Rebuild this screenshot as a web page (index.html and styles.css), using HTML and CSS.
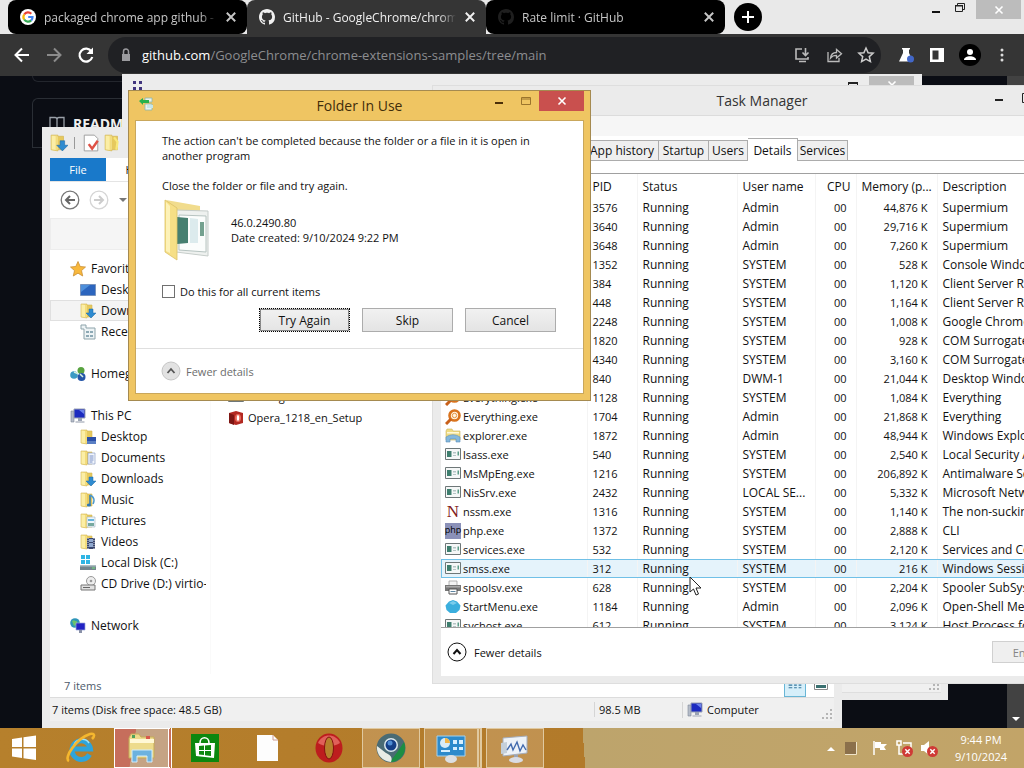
FILE: index.html
```
<!DOCTYPE html>
<html lang="en">
<head>
<meta charset="utf-8">
<title>Desktop</title>
<link rel="stylesheet" href="styles.css">
</head>
<body>
<svg class="defs" width="0" height="0" aria-hidden="true">
  <symbol id="i-x" viewBox="0 0 10 10"><path d="M1.5 1.5l7 7M8.500 1.500l-7 7" stroke="currentColor" stroke-width="1.600" fill="none"/></symbol>
  <symbol id="i-octocat" viewBox="0 0 16 16"><path fill="currentColor" d="M8 0C3.580 0 0 3.580 0 8c0 3.540 2.290 6.530 5.470 7.590.4.070.550-.170.550-.380 0-.190-.010-.820-.010-1.490-2.010.370-2.530-.490-2.690-.940-.090-.230-.480-.940-.820-1.130-.280-.150-.680-.520-.010-.530.630-.010 1.080.580 1.230.820.720 1.210 1.870.870 2.330.660.070-.520.280-.870.510-1.070-1.780-.2-3.640-.890-3.640-3.950 0-.870.310-1.590.820-2.150-.080-.2-.360-1.020.080-2.120 0 0 .670-.210 2.200.820.640-.180 1.320-.270 2-.270s1.360.090 2 .270c1.530-1.040 2.200-.820 2.200-.820.440 1.100.160 1.920.080 2.120.510.560.820 1.270.820 2.150 0 3.070-1.870 3.750-3.650 3.950.290.250.540.730.540 1.480 0 1.070-.010 1.930-.010 2.200 0 .210.150.460.550.380A8.010 8.010 0 0016 8c0-4.420-3.580-8-8-8z"/></symbol>
  <symbol id="i-folder" viewBox="0 0 16 16"><path d="M1 1h6v14l-6-1z" fill="#f3dc7c"/><path d="M1 1l4 1v13l-4-1z" fill="#fbeea6"/><path d="M7 2h5v12H7z" fill="#e6c95e"/><path d="M1 1h6v1h5v12H7v1l-6-1z" fill="none" stroke="#d3b550" stroke-width=".6"/></symbol>
  <symbol id="i-down" viewBox="0 0 16 16"><use href="#i-folder"/><path d="M9 6h4v4h3l-5 5-5-5h3z" fill="#2f8bd0" stroke="#1a68a8" stroke-width=".5"/></symbol>
  <symbol id="i-fdesk" viewBox="0 0 16 16"><use href="#i-folder"/><path d="M7 8h9v6H7z" fill="#2b4fa8"/><path d="M7 12h9v3H7z" fill="#5a7fc4"/></symbol>
  <symbol id="i-fdoc" viewBox="0 0 16 16"><use href="#i-folder"/><path d="M8 3h7v11H8z" fill="#f2f6fc" stroke="#8c9fc4" stroke-width=".7"/><path d="M9.500 6h4M9.500 8h4M9.500 10h4M9.500 12h3" stroke="#5b77b8" stroke-width=".8"/></symbol>
  <symbol id="i-fmusic" viewBox="0 0 16 16"><use href="#i-folder"/><path d="M10 3v9" stroke="#2d78b4" stroke-width="1.500"/><path d="M10 3c4 2 5 5 3 9" stroke="#4a98ce" stroke-width="1.500" fill="none"/><ellipse cx="9" cy="13" rx="2.200" ry="1.600" fill="#2d78b4"/></symbol>
  <symbol id="i-fpic" viewBox="0 0 16 16"><use href="#i-folder"/><path d="M7 4h8v10H7z" fill="#eef6fb" stroke="#a2b4c0" stroke-width=".6"/><path d="M8 6h6v2H8z" fill="#67b4dd"/><path d="M8 10h6v3H8z" fill="#77a99f"/></symbol>
  <symbol id="i-fvid" viewBox="0 0 16 16"><use href="#i-folder"/><path d="M7 4h8v11H7z" fill="#39466e"/><path d="M9 5h4v3H9zM9 9h4v4H9z" fill="#8fa8cf"/><path d="M8 4v11M14 4v11" stroke="#fff" stroke-width=".8" stroke-dasharray="1 1"/></symbol>
  <symbol id="i-exe" viewBox="0 0 16 16"><path d="M.5 1.500h15v11H.5z" fill="#f5f7f7" stroke="#6e7778"/><path d="M2 4h4.500v6H2z" fill="#3e7e6e"/><path d="M8 5h3v1.500H8zM8 8h3v1H8z" fill="#b5c5c5"/><path d="M12.500 4.500H14v4h-1.500z" fill="#5b9c87"/></symbol>
  <symbol id="i-search" viewBox="0 0 16 16"><circle cx="9.500" cy="6.500" r="5" fill="#fff3df" stroke="#d9731d" stroke-width="2.600"/><path d="M6 10l-5 5" stroke="#c8601a" stroke-width="3"/><circle cx="9.500" cy="6.500" r="2.200" fill="none" stroke="#e89343"/></symbol>
  <symbol id="i-pc" viewBox="0 0 16 16"><path d="M1 3h3v11H1z" fill="#b5bcc9" stroke="#7d8798" stroke-width=".6"/><path d="M4 1h11v9H4z" fill="#1c2bc0" stroke="#9aa3b4"/><path d="M9 2h5v4z" fill="#6c83ec"/><path d="M8 10h4v3H8z" fill="#9aa3b4"/><path d="M5.500 13h9v2h-9z" fill="#c8ccd4"/></symbol>
  <symbol id="i-expl" viewBox="0 0 16 16"><path d="M1 3l1-2h5l1 2h7v9H1z" fill="#f0dc82" stroke="#c9b45c" stroke-width=".6"/><path d="M2 4h12v1.500H2z" fill="#fff9d8"/><path d="M1 9c5-3 9-3 14 0v5h-4v-3H5v3H1z" fill="#84b8dc" stroke="#5c8fb8" stroke-width=".6"/></symbol>
  <symbol id="i-caret" viewBox="0 0 20 20"><circle cx="10" cy="10" r="9" fill="none" stroke="currentColor"/><path d="M6.500 12L10 8l3.500 4" stroke="currentColor" stroke-width="2" fill="none"/></symbol>
  <symbol id="i-grip" viewBox="0 0 10 10"><path d="M8 0h2v2H8zM8 4h2v2H8zM8 8h2v2H8zM4 4h2v2H4zM4 8h2v2H4zM0 8h2v2H0z" fill="#b5b5b5"/></symbol>
  <symbol id="i-bad" viewBox="0 0 10 10"><circle cx="5" cy="5" r="5" fill="#cf3a36"/><path d="M3 3l4 4M7 3L3 7" stroke="#fff" stroke-width="1.300"/></symbol>
</svg>

<main class="workspace">
  <section class="browser" aria-label="Browser">
    <div class="tabstrip">
      <div class="tab">
        <svg class="s16" viewBox="0 0 16 16"><circle cx="8" cy="8" r="8" fill="#fff"/><g fill="none" stroke-width="2.200"><path d="M4.200 5.500A4.600 4.600 0 0111.300 4.800" stroke="#ea4335"/><path d="M4.200 5.500a4.600 4.600 0 000 5" stroke="#fbbc05"/><path d="M4.200 10.500a4.600 4.600 0 007 .9" stroke="#34a853"/><path d="M11.200 11.400A4.600 4.600 0 0012.500 8H8.200" stroke="#4285f4"/></g></svg>
        <span class="tab-text">packaged chrome app github - G</span><button class="tab-x" aria-label="Close tab"><svg viewBox="0 0 10 10"><use href="#i-x"/></svg></button>
      </div>
      <div class="tab active">
        <svg class="s16" viewBox="0 0 16 16"><use href="#i-octocat"/></svg>
        <span class="tab-text">GitHub - GoogleChrome/chrome</span><button class="tab-x" aria-label="Close tab"><svg viewBox="0 0 10 10"><use href="#i-x"/></svg></button>
      </div>
      <div class="tab">
        <svg class="s16 dim" viewBox="0 0 16 16"><use href="#i-octocat"/></svg>
        <span class="tab-text">Rate limit · GitHub</span><button class="tab-x" aria-label="Close tab"><svg viewBox="0 0 10 10"><use href="#i-x"/></svg></button>
      </div>
      <button class="newtab" aria-label="New tab"><svg viewBox="0 0 28 28"><path d="M14 8v12M8 14h12" stroke="#fff" stroke-width="2"/></svg></button>
      <div class="chrome-ctl">
        <svg class="s16" viewBox="0 0 16 16"><path d="M4 11h8v2H4z" fill="#111"/></svg>
        <svg class="s16" viewBox="0 0 16 16"><path d="M3.500 5.500h7v6h-7zM5.500 5V3.500h7v6H11" fill="none" stroke="#222"/><path d="M3 5h8v1.500H3z" fill="#222"/></svg>
        <button class="chrome-close" aria-label="Close"><svg class="s10" viewBox="0 0 10 10"><use href="#i-x"/></svg></button>
      </div>
    </div>
    <div class="toolbar">
      <svg class="s20" viewBox="0 0 20 20"><path d="M17 10H4M10 3.500L3.500 10l6.500 6.500" stroke="#fff" stroke-width="2" fill="none"/></svg>
      <svg class="s20" viewBox="0 0 20 20"><path d="M3 10h13M10 3.500l6.500 6.500-6.500 6.500" stroke="#8b8b8b" stroke-width="2" fill="none"/></svg>
      <svg class="s20" viewBox="0 0 20 20"><path d="M15.500 6.500A6.500 6.500 0 1016.300 12" stroke="#fff" stroke-width="2.200" fill="none"/><path d="M17 2.500V9h-6.500z" fill="#fff"/></svg>
      <div class="omnibox">
        <svg class="s16" viewBox="0 0 16 16"><path d="M4 7h8v7H4z" fill="#9b9b9f"/><path d="M5.500 7V4.500a2.500 2.500 0 015 0V7" stroke="#9b9b9f" stroke-width="1.500" fill="none"/></svg>
        <span class="url"><b>github.com</b>/GoogleChrome/chrome-extensions-samples/tree/main</span>
        <svg class="s18" viewBox="0 0 18 18"><path d="M9 3H3v10h12v-2M6 15.500h7" stroke="#bbb" stroke-width="1.600" fill="none"/><path d="M12.500 2v7M9.500 6.500l3 3 3-3" stroke="#bbb" stroke-width="1.600" fill="none"/></svg>
        <svg class="s18" viewBox="0 0 18 18"><path d="M3 6v9.500h11V12" stroke="#bbb" stroke-width="1.300" fill="none"/><path d="M5.500 12c.5-4 3-5.500 6-5.500V3.500l5 4.300-5 4.200V9.300c-2.500 0-4.500.7-6 2.700z" fill="none" stroke="#bbb" stroke-width="1.300"/></svg>
        <svg class="s18" viewBox="0 0 18 18"><path d="M9 2l2.100 4.700 5 .5-3.800 3.400 1.100 5L9 13l-4.400 2.600 1.100-5L1.900 7.200l5-.5z" fill="none" stroke="#ccc" stroke-width="1.500"/></svg>
      </div>
      <div class="extensions">
        <svg class="s18" viewBox="0 0 18 18"><path d="M5 2h8v1.500h-1V7l4 8.500H2L6 7V3.500H5z" fill="#fff"/><circle cx="13.500" cy="13" r="3.500" fill="#4267c8"/></svg>
        <svg class="s18" viewBox="0 0 18 18"><path d="M2 2h14v14H2z" fill="#fff"/><path d="M4.500 4.500h6v9h-6z" fill="#353535"/></svg>
        <svg class="s22" viewBox="0 0 22 22"><circle cx="11" cy="11" r="11" fill="#000"/><circle cx="11" cy="8" r="3" fill="#fff"/><path d="M5 16c0-5 12-5 12 0z" fill="#fff"/></svg>
        <svg class="s16" viewBox="0 0 16 16"><circle cx="8" cy="3" r="1.500" fill="#ddd"/><circle cx="8" cy="8" r="1.500" fill="#ddd"/><circle cx="8" cy="13" r="1.500" fill="#ddd"/></svg>
      </div>
    </div>
    <div class="page">
      <div class="page-body">
        <div class="strip"></div>
        <div class="readme"><svg class="s16" viewBox="0 0 16 16"><path d="M1 2.500h5q2 0 2 2 0-2 2-2h5v11h-5q-2 0-2 1.500 0-1.500-2-1.500H1zM8 4.500V15" fill="none" stroke="#9aa0a8" stroke-width="1.300"/></svg><b>README</b></div>
      </div>
      <div class="page-scroll"><svg class="s10" viewBox="0 0 10 10"><path d="M1 3h8L5 7z" fill="#fff"/></svg></div>
    </div>
  </section>

  <section class="win back-lower" aria-label="Background folder"><div class="back-status"><svg class="s10" viewBox="0 0 10 10"><use href="#i-grip"/></svg></div></section>
  <section class="win back-upper" aria-label="Background window">
    <svg class="s16" viewBox="0 0 16 16"><path d="M3 3h3v3H3zM9 3h3v3H9zM3 9h3v3H3zM9 9h3v3H9z" fill="#41357e"/></svg>
    <svg class="s16 back-max" viewBox="0 0 16 16"><path d="M3.500 4.500h9v8h-9z" fill="none" stroke="#222"/><path d="M3 4h10v2H3z" fill="#222"/></svg>
    <span class="back-close"><svg class="s10" viewBox="0 0 10 10"><use href="#i-x"/></svg></span>
  </section>

  <section class="win explorer" aria-label="Downloads">
    <div class="quick">
      <svg class="s18" viewBox="0 0 16 16"><use href="#i-down"/></svg><i></i>
      <svg class="s18" viewBox="0 0 16 16"><path d="M2 1h9l3 3v11H2z" fill="#fff" stroke="#999" stroke-width=".8"/><path d="M6 9l3 4 5-7" stroke="#df5145" stroke-width="2.200" fill="none"/></svg>
      <svg class="s18" viewBox="0 0 16 16"><use href="#i-folder"/><path d="M9 3l3 4-1 7" stroke="#f8e87b" stroke-width="2" fill="none"/></svg>
    </div>
    <div class="ribbon"><button class="file">File</button><button class="ribtab">Home</button></div>
    <div class="navrow">
      <svg class="s20" viewBox="0 0 20 20"><circle cx="10" cy="10" r="8.800" fill="none" stroke="#777" stroke-width="1.300"/><path d="M15 10H6M10 6l-4 4 4 4" stroke="#666" stroke-width="2" fill="none"/></svg>
      <svg class="s20" viewBox="0 0 20 20"><circle cx="10" cy="10" r="8.800" fill="none" stroke="#d5d5d5" stroke-width="1.300"/><path d="M5 10h9M10 6l4 4-4 4" stroke="#ccc" stroke-width="2" fill="none"/></svg>
      <svg class="s10" viewBox="0 0 10 10"><path d="M1 3h8L5 7z" fill="#777"/></svg>
    </div>
    <div class="organize"></div>
    <div class="panes">
      <ul class="tree">
        <li class="root"><svg class="s16" viewBox="0 0 16 16"><path d="M8 .5l2.200 5 5.300.5-4 3.600 1.200 5.400L8 12.200 3.300 15l1.200-5.400L.5 6l5.300-.5z" fill="#f8b83c" stroke="#c98f35" stroke-width=".8"/></svg>Favorites</li>
        <li><svg class="s16" viewBox="0 0 16 16"><path d="M.5 2.500h15v11H.5z" fill="#2c65be" stroke="#7893bd"/><path d="M1 3h9L1 10z" fill="#4d8fdb"/></svg>Desktop</li>
        <li class="sel"><svg class="s16" viewBox="0 0 16 16"><use href="#i-down"/></svg>Downloads</li>
        <li><svg class="s16" viewBox="0 0 16 16"><path d="M1 1h5v3h9v11H4V5H1z" fill="#edf3f5" stroke="#8da3aa"/><path d="M6 7h3v2H6zM10 7h3v2h-3zM6 11h3v2H6zM10 11h3v2h-3z" fill="#8da9b5"/></svg>Recent places</li>
        <li class="gap"></li>
        <li class="root"><svg class="s16" viewBox="0 0 16 16"><circle cx="11" cy="4.500" r="3.500" fill="#58a33f"/><circle cx="4" cy="9" r="3.800" fill="#3c9ac4"/><circle cx="11.500" cy="11" r="4" fill="#2556a8"/><path d="M4 6l5 2M10 8l3 3" stroke="#d7f0e1" stroke-width="1.500"/></svg>Homegroup</li>
        <li class="gap"></li>
        <li class="root"><svg class="s16" viewBox="0 0 16 16"><use href="#i-pc"/></svg>This PC</li>
        <li><svg class="s16" viewBox="0 0 16 16"><use href="#i-fdesk"/></svg>Desktop</li>
        <li><svg class="s16" viewBox="0 0 16 16"><use href="#i-fdoc"/></svg>Documents</li>
        <li><svg class="s16" viewBox="0 0 16 16"><use href="#i-down"/></svg>Downloads</li>
        <li><svg class="s16" viewBox="0 0 16 16"><use href="#i-fmusic"/></svg>Music</li>
        <li><svg class="s16" viewBox="0 0 16 16"><use href="#i-fpic"/></svg>Pictures</li>
        <li><svg class="s16" viewBox="0 0 16 16"><use href="#i-fvid"/></svg>Videos</li>
        <li><svg class="s16" viewBox="0 0 16 16"><path d="M1 0h4v4H1zM6 0h4v4H6zM1 5h4v4H1zM6 5h4v4H6z" fill="#2fb5e4"/><path d="M0 10h16v5H0z" fill="#73858d"/><path d="M0 10h16v1.500H0z" fill="#aebcc2"/><path d="M12 12.500h3v1h-3z" fill="#71e07a"/></svg>Local Disk (C:)</li>
        <li><svg class="s16" viewBox="0 0 16 16"><circle cx="11" cy="5" r="4.500" fill="#eee" stroke="#999"/><circle cx="11" cy="5" r="1.300" fill="#999"/><path d="M1 9h14v5H1z" fill="#e2e2e2" stroke="#777"/><path d="M3 11.500h7" stroke="#666"/></svg>CD Drive (D:) virtio-win</li>
        <li class="gap"></li>
        <li class="root"><svg class="s16" viewBox="0 0 16 16"><circle cx="5" cy="5" r="4.800" fill="#2e95b8"/><path d="M2 3c3-2 3 1 5 0v3L4 8z" fill="#6cc26b"/><path d="M6 5h9v7H6z" fill="#2222c4" stroke="#9ca6d8" stroke-width=".7"/><path d="M9 12h3v3H9z" fill="#8991a8"/></svg>Network</li>
      </ul>
      <ul class="files">
        <li><svg class="s16" viewBox="0 0 16 16"><use href="#i-exe"/></svg>catalog</li>
        <li><svg class="s16" viewBox="0 0 16 16"><path d="M1 3l7-2 7 2v10l-7 2-7-2z" fill="#b22821"/><path d="M1 3l5 2v10l-5-2z" fill="#7d1613"/><ellipse cx="10" cy="8" rx="3" ry="4" fill="#e86a5c"/><ellipse cx="10" cy="8" rx="1.200" ry="3" fill="#fff"/></svg>Opera_1218_en_Setup</li>
      </ul>
    </div>
    <div class="count"><span>7 items</span>
      <svg class="view on" viewBox="0 0 22 22"><path d="M4 7h4M10 7h3M15 7h3M4 10h4M10 10h3M15 10h3M4 13h4M10 13h3M15 13h3" stroke="#37769a" stroke-width="1.200"/></svg>
      <svg class="view" viewBox="0 0 22 22"><path d="M4.500 5.500h13v9h-13z" fill="#fff" stroke="#888"/><path d="M6 10h10v3H6z" fill="#3a7070"/></svg>
    </div>
    <div class="status"><span class="grow">7 items (Disk free space: 48.5 GB)</span><span class="size">98.5 MB</span><span class="zone"><svg class="s16" viewBox="0 0 16 16"><use href="#i-pc"/></svg>Computer</span><svg class="s10" viewBox="0 0 10 10"><use href="#i-grip"/></svg></div>
  </section>

  <section class="win taskmgr" aria-label="Task Manager">
    <header class="tm-title"><h2>Task Manager</h2>
      <svg class="s16" viewBox="0 0 16 16"><path d="M4 8h8v2H4z" fill="#222"/></svg><svg class="s16" viewBox="0 0 16 16"><path d="M1.500 2.500h10v9h-10z" fill="none" stroke="#222"/></svg>
    </header>
    <div class="tm-body">
      <div class="menubar"></div>
      <nav class="tabs"><button class="w-app">App history</button><button class="w-start">Startup</button><button class="w-users">Users</button><button class="current">Details</button><button class="w-serv">Services</button></nav>
      <div class="grid">
        <table>
          <colgroup><col class="c1"><col class="c2"><col class="c3"><col class="c4"><col class="c5"><col class="c6"><col></colgroup>
          <thead><tr><th></th><th>PID</th><th>Status</th><th>User name</th><th>CPU</th><th>Memory (p...</th><th>Description</th></tr></thead>
          <tbody>
            <tr><td></td><td>3576</td><td>Running</td><td>Admin</td><td>00</td><td>44,876 K</td><td>Supermium</td></tr>
            <tr><td></td><td>3640</td><td>Running</td><td>Admin</td><td>00</td><td>29,716 K</td><td>Supermium</td></tr>
            <tr><td></td><td>3648</td><td>Running</td><td>Admin</td><td>00</td><td>7,260 K</td><td>Supermium</td></tr>
            <tr><td></td><td>1352</td><td>Running</td><td>SYSTEM</td><td>00</td><td>528 K</td><td>Console Window Host</td></tr>
            <tr><td></td><td>384</td><td>Running</td><td>SYSTEM</td><td>00</td><td>1,120 K</td><td>Client Server Runtime</td></tr>
            <tr><td></td><td>448</td><td>Running</td><td>SYSTEM</td><td>00</td><td>1,164 K</td><td>Client Server Runtime</td></tr>
            <tr><td></td><td>2248</td><td>Running</td><td>SYSTEM</td><td>00</td><td>1,008 K</td><td>Google Chrome</td></tr>
            <tr><td></td><td>1820</td><td>Running</td><td>SYSTEM</td><td>00</td><td>928 K</td><td>COM Surrogate</td></tr>
            <tr><td></td><td>4340</td><td>Running</td><td>SYSTEM</td><td>00</td><td>3,160 K</td><td>COM Surrogate</td></tr>
            <tr><td></td><td>840</td><td>Running</td><td>DWM-1</td><td>00</td><td>21,044 K</td><td>Desktop Window</td></tr>
            <tr><td><span class="proc"><svg class="s16" viewBox="0 0 16 16"><use href="#i-search"/></svg>Everything.exe</span></td><td>1128</td><td>Running</td><td>SYSTEM</td><td>00</td><td>1,084 K</td><td>Everything</td></tr>
            <tr><td><span class="proc"><svg class="s16" viewBox="0 0 16 16"><use href="#i-search"/></svg>Everything.exe</span></td><td>1704</td><td>Running</td><td>Admin</td><td>00</td><td>21,868 K</td><td>Everything</td></tr>
            <tr><td><span class="proc"><svg class="s16" viewBox="0 0 16 16"><use href="#i-expl"/></svg>explorer.exe</span></td><td>1872</td><td>Running</td><td>Admin</td><td>00</td><td>48,944 K</td><td>Windows Explorer</td></tr>
            <tr><td><span class="proc"><svg class="s16" viewBox="0 0 16 16"><use href="#i-exe"/></svg>lsass.exe</span></td><td>540</td><td>Running</td><td>SYSTEM</td><td>00</td><td>2,540 K</td><td>Local Security Authority</td></tr>
            <tr><td><span class="proc"><svg class="s16" viewBox="0 0 16 16"><use href="#i-exe"/></svg>MsMpEng.exe</span></td><td>1216</td><td>Running</td><td>SYSTEM</td><td>00</td><td>206,892 K</td><td>Antimalware Service</td></tr>
            <tr><td><span class="proc"><svg class="s16" viewBox="0 0 16 16"><use href="#i-exe"/></svg>NisSrv.exe</span></td><td>2432</td><td>Running</td><td>LOCAL SE...</td><td>00</td><td>5,332 K</td><td>Microsoft Network</td></tr>
            <tr><td><span class="proc"><span class="n-icon" aria-hidden="true">N</span>nssm.exe</span></td><td>1316</td><td>Running</td><td>SYSTEM</td><td>00</td><td>1,140 K</td><td>The non-sucking</td></tr>
            <tr><td><span class="proc"><span class="php-icon" aria-hidden="true">php</span>php.exe</span></td><td>1372</td><td>Running</td><td>SYSTEM</td><td>00</td><td>2,888 K</td><td>CLI</td></tr>
            <tr><td><span class="proc"><svg class="s16" viewBox="0 0 16 16"><use href="#i-exe"/></svg>services.exe</span></td><td>532</td><td>Running</td><td>SYSTEM</td><td>00</td><td>2,120 K</td><td>Services and Controller</td></tr>
            <tr class="hot"><td><span class="proc"><svg class="s16" viewBox="0 0 16 16"><use href="#i-exe"/></svg>smss.exe</span></td><td>312</td><td>Running</td><td>SYSTEM</td><td>00</td><td>216 K</td><td>Windows Session</td></tr>
            <tr><td><span class="proc"><svg class="s16" viewBox="0 0 16 16"><path d="M4 1h8v5H4z" fill="#f4f4f4" stroke="#999" stroke-width=".7"/><path d="M0 5h16v6H0z" fill="#777"/><path d="M1 6h14v1.500H1z" fill="#aaa"/><path d="M4 9h8v5H4z" fill="#fff" stroke="#555"/><path d="M5.500 11.500h5" stroke="#5c84a0"/></svg>spoolsv.exe</span></td><td>628</td><td>Running</td><td>SYSTEM</td><td>00</td><td>2,204 K</td><td>Spooler SubSystem</td></tr>
            <tr><td><span class="proc"><svg class="s16" viewBox="0 0 16 16"><path d="M8 1l4 1.500 3.500 4-1 4.500L11 14H5l-3.500-3L.5 6.500 4 2.500z" fill="#3aaedd"/><path d="M4 4l4-2 4 2-4 2z" fill="#7accec"/></svg>StartMenu.exe</span></td><td>1184</td><td>Running</td><td>Admin</td><td>00</td><td>2,096 K</td><td>Open-Shell Menu</td></tr>
            <tr><td><span class="proc"><svg class="s16" viewBox="0 0 16 16"><use href="#i-exe"/></svg>svchost.exe</span></td><td>612</td><td>Running</td><td>SYSTEM</td><td>00</td><td>3,124 K</td><td>Host Process for</td></tr>
          </tbody>
        </table>
      </div>
      <footer class="tm-foot"><button class="fewer"><svg class="s20" viewBox="0 0 20 20"><use href="#i-caret"/></svg>Fewer details</button><button class="endtask" disabled>End task</button></footer>
    </div>
  </section>

  <section class="win dialog" role="dialog" aria-labelledby="dlg-title">
    <header class="dlg-title">
      <svg class="s16" viewBox="0 0 16 16"><path d="M7 2h7v4H7zM7 8h7v6H7z" fill="#e9f1ef" stroke="#8ab7ad" stroke-width=".8"/><path d="M1 5l4-3v2h6v3H5v2z" fill="#26b14c"/><path d="M9 9h6v3H9z" fill="#c5e6e9"/></svg>
      <h2 id="dlg-title">Folder In Use</h2>
      <button class="cap" aria-label="Minimize"><svg class="s16" viewBox="0 0 16 16"><path d="M4 9h8v2H4z" fill="#4b2f08"/></svg></button>
      <button class="cap" aria-label="Maximize"><svg class="s16" viewBox="0 0 16 16"><path d="M3.500 4.500h9v7h-9zM3 6h10" fill="none" stroke="#9a742d"/></svg></button>
      <button class="cap red" aria-label="Close"><svg class="s10" viewBox="0 0 10 10"><use href="#i-x"/></svg></button>
    </header>
    <div class="dlg-body">
      <div class="dlg-main">
        <p>The action can't be completed because the folder or a file in it is open in another program</p>
        <p>Close the folder or file and try again.</p>
        <div class="item">
          <svg class="big" viewBox="0 0 50 64"><path d="M4 2l34 6v8H14z" fill="#f1dc8d"/><path d="M14 12l32 1v45l-32-4z" fill="#eef1ef" stroke="#c6cdca"/><path d="M17 17l27 1v36l-27-2z" fill="#fbfdfc" stroke="#b7c4c1"/><path d="M15 19l11 1v25l-11 1z" fill="#467f70"/><path d="M28 20l8 1v24h-8z" fill="#dcebed"/><path d="M38 24h4v14h-4z" fill="#74a18f"/><path d="M3 2l12 8v52L3 54z" fill="#f6df86" stroke="#dcc167" stroke-width=".8"/><path d="M4 4l4 4v47l-4-2z" fill="#fdf2b8"/></svg>
          <div>46.0.2490.80<br>Date created: 9/10/2024 9:22 PM</div>
        </div>
        <label class="check"><input type="checkbox">Do this for all current items</label>
        <div class="actions"><button class="focus">Try Again</button><button>Skip</button><button>Cancel</button></div>
      </div>
      <button class="dlg-foot"><svg class="s20" viewBox="0 0 20 20"><circle cx="10" cy="10" r="9" fill="#e2e2e2" stroke="#c6c6c6"/><path d="M6.500 12L10 8l3.500 4" stroke="#555" stroke-width="1.800" fill="none"/></svg>Fewer details</button>
    </div>
  </section>

  <svg class="cursor" viewBox="0 0 13 20"><path d="M1 1v15l3.500-3 2.500 6 2.500-1-2.500-6H12z" fill="#fff" stroke="#222"/></svg>
</main>

<footer class="taskbar">
  <button aria-label="Start"><svg class="s28" viewBox="0 0 28 28"><path d="M2 5l10-1.500V13H2zM13.500 3.300L26 1.500V13H13.500zM2 14.500h10V24L2 22.500zM13.500 14.500H26V26l-12.500-1.700z" fill="#fff"/></svg></button>
  <button aria-label="Internet Explorer"><svg class="s32" viewBox="0 0 32 32"><path d="M24.500 22.500A9.300 9.300 0 1125.500 17H9" fill="none" stroke="#2fa4da" stroke-width="5"/><path d="M24 11C20 5 11 7 9 13" fill="none" stroke="#a5e3f8" stroke-width="1.500"/><path d="M4 29C-2 26 12 6 25 2c5-1 5 2 2 5" fill="none" stroke="#f5b72e" stroke-width="2.600"/></svg></button>
  <button class="open lit" aria-label="File Explorer"><svg class="s32" viewBox="0 0 32 32"><path d="M3 6l2-4h8l2 3h13v21H3z" fill="#eddb8c" stroke="#c4aa58"/><path d="M4 7h24v4H4z" fill="#fff8d5"/><path d="M6 3h3v3H6z" fill="#4fa35b"/><path d="M20 4h4v3h-4z" fill="#d9594d"/><path d="M6 30V18h20v12h-5v-6H11v6z" fill="#6cb2df" stroke="#d2ecfa"/></svg></button>
  <button aria-label="Store"><svg class="s30" viewBox="0 0 30 30"><path d="M1 1h28v28H1z" fill="#0c870f"/><path d="M5 10h20l-1 15-18-2z" fill="#fff"/><path d="M10 10c0-7 9-7 9 0" fill="none" stroke="#fff" stroke-width="1.600"/><path d="M9 13l5-.4v4.400H9zM15 12.500l6-.5v5h-6zM9 18h5v4l-5-.4zM15 18h6v5l-6-.7z" fill="#0c870f"/></svg></button>
  <button aria-label="Document"><svg class="s30" viewBox="0 0 30 30"><path d="M5 2h16l5 5v21H5z" fill="#fdfdfd"/><path d="M21 2v5h5" fill="none" stroke="#cf9c91"/></svg></button>
  <button aria-label="Opera"><svg class="s30" viewBox="0 0 30 30"><ellipse cx="15" cy="15" rx="13.500" ry="14.500" fill="#bd1d1e"/><path d="M4 10C8 0 22 0 26 10c-5 4-17 4-22 0z" fill="#e0605a"/><ellipse cx="15" cy="15" rx="4.500" ry="11" fill="#b6802c" stroke="#861111"/></svg></button>
  <button class="open" aria-label="Supermium"><svg class="s30" viewBox="0 0 30 30"><circle cx="15" cy="15" r="14.500" fill="#4a6b74"/><path d="M28 9a14.500 14.500 0 01-14 20l8-11z" fill="#1d8e43"/><path d="M1 13l9 7c4 2 7 4 5 9A14.500 14.500 0 011 13z" fill="#e8ece6"/><circle cx="15" cy="12" r="7" fill="#dce8ee"/><circle cx="15" cy="12" r="5.500" fill="#153f86"/><circle cx="14" cy="10" r="2.500" fill="#4e8cd2"/></svg></button>
  <button class="open stacked" aria-label="Control Panel"><svg class="s32" viewBox="0 0 32 32"><path d="M2 4h28v20H2z" fill="#2c8acb" stroke="#a3d1ee"/><circle cx="10" cy="11" r="5" fill="#d7ebf6"/><path d="M10 11V6a5 5 0 015 5z" fill="#f0b548"/><path d="M18 8h4v4h-4zM24 8h4v4h-4zM18 15h4v3h-4zM24 15h4v3h-4zM6 18h9v2H6z" fill="#d6efff"/><ellipse cx="16" cy="27" rx="6" ry="4" fill="#dcdfe2"/></svg></button>
  <button class="open" aria-label="Task Manager"><svg class="s32" viewBox="0 0 32 32"><path d="M4 6l24-2v17L4 24z" fill="#edf2f8" stroke="#a5adbb"/><path d="M2 11l6-1v11l-6 1z" fill="#c4cfda"/><path d="M8 18l4-6 2 6 4-8 3 9 3-6 3 5" fill="none" stroke="#4169ad" stroke-width="1.400"/><path d="M15 23h4v4h-4z" fill="#9ba4b5"/><ellipse cx="17" cy="28" rx="7" ry="3" fill="#dadce4"/></svg></button>
  <div class="tray">
    <svg class="s10" viewBox="0 0 10 10"><path d="M1 8h8L5 4z" fill="#fff"/></svg>
    <svg class="s16" viewBox="0 0 16 16"><path d="M2 2h11v12H2z" fill="#8b704b"/><path d="M13.500 2v12.500H2" fill="none" stroke="#efe4c9"/></svg>
    <svg class="s16 flag" viewBox="0 0 16 16"><path d="M2 1v14" stroke="#fff" stroke-width="1.500"/><path d="M3 2h6v2h6l-3 3 2 3H8V8H3z" fill="#fff"/></svg>
    <svg class="s18" viewBox="0 0 18 18"><path d="M2 2h4v4H2zM4 6v9h4M8 4h8v7" fill="none" stroke="#fff" stroke-width="1.500"/><svg x="7" y="7" width="11" height="11" viewBox="0 0 10 10"><use href="#i-bad"/></svg></svg>
    <svg class="s18" viewBox="0 0 18 18"><path d="M1 6h3l5-4v14l-5-4H1z" fill="#fff"/><svg x="7" y="7" width="11" height="11" viewBox="0 0 10 10"><use href="#i-bad"/></svg></svg>
    <time>9:44 PM<br>9/10/2024</time>
  </div>
</footer>
</body>
</html>
```

FILE: styles.css
```
* { box-sizing: border-box; }
body {
  margin: 0;
  height: 100vh;
  display: flex;
  flex-direction: column;
  overflow: hidden;
  font: 11px/15px "Open Sans", "Noto Sans", sans-serif;
  color: #111;
}
button { font: inherit; color: inherit; border: 0; padding: 0; background: none; }
h2, p, ul { margin: 0; padding: 0; font-weight: 400; }
ul { list-style: none; }
svg { display: block; flex: none; }
.defs { position: absolute; }
.s10 { width: 10px; height: 10px; }
.s16 { width: 16px; height: 16px; }
.s18 { width: 18px; height: 18px; }
.s20 { width: 20px; height: 20px; }
.s22 { width: 22px; height: 22px; }
.s28 { width: 28px; height: 28px; }
.s30 { width: 30px; height: 30px; }
.s32 { width: 32px; height: 32px; }

.workspace { position: relative; flex: 1; min-height: 0; overflow: hidden; }

/* Browser */
.browser { height: 100%; display: flex; flex-direction: column; background: #0b0d14; }
.tabstrip { display: flex; height: 34px; padding-left: 8px; background: #e9e9e9; }
.tab {
  width: 239px;
  display: flex;
  align-items: center;
  gap: 8px;
  padding: 0 10px 0 12px;
  border-radius: 8px;
  background: #000;
  color: #c6c6c6;
}
.tab.active { background: #353535; color: #f0f0f0; border-radius: 8px 8px 0 0; }
.tab-text {
  flex: 1;
  min-width: 0;
  overflow: hidden;
  white-space: nowrap;
  font-size: 12px;
  mask-image: linear-gradient(to right, #000 90%, transparent);
}
.tab .dim { color: #1f1f1f; }
.tab-x { width: 12px; height: 12px; }
.newtab { align-self: center; width: 28px; height: 28px; margin-left: 9px; border-radius: 50%; background: #000; }
.chrome-ctl { display: flex; gap: 8px; margin-left: auto; padding-right: 3px; color: #fff; }
.chrome-close { width: 45px; height: 19px; display: grid; place-items: center; background: #bcbcbc; }
.toolbar { display: flex; align-items: center; gap: 12px; height: 42px; padding: 0 14px 0 12px; background: #353535; }
.omnibox {
  flex: 1;
  display: flex;
  align-items: center;
  gap: 14px;
  height: 36px;
  padding: 0 6px 0 10px;
  border-radius: 18px;
  background: #202124;
}
.url { flex: 1; margin-left: -6px; font-size: 13px; color: #8c8d90; }
.url b { font-weight: 400; color: #fff; }
.extensions { display: flex; align-items: center; gap: 13px; margin-left: 4px; }
.page { flex: 1; display: flex; }
.page-body { flex: 1; padding-left: 32px; }
.strip { width: 120px; height: 6px; border: 1px solid #23262d; border-top: 0; border-radius: 0 0 0 6px; }
.readme {
  display: flex;
  align-items: center;
  gap: 8px;
  height: 50px;
  margin-top: 16px;
  padding-left: 16px;
  border: 1px solid #2a2e35;
  border-right: 0;
  border-radius: 6px 0 0 0;
  color: #f0f0f0;
  font-size: 14px;
}
.page-scroll { width: 17px; display: flex; align-items: end; justify-content: center; padding-bottom: 4px; background: #424242; }

/* Windows */
.win { position: absolute; background: #ebebeb; }
.back-lower { left: 148px; top: 100px; width: 800px; height: 600px; display: flex; flex-direction: column; justify-content: end; padding: 7px; }
.back-status { display: flex; align-items: end; justify-content: end; height: 24px; padding: 2px; background: #f0f0f0; border-bottom: 1px solid #dedede; }
.back-upper { left: 122px; top: 74px; width: 800px; height: 500px; display: flex; padding: 4px 8px; background: #ececec; }
.back-max { margin-left: auto; }
.back-close { width: 45px; height: 18px; margin: -2px 0 0 8px; display: grid; place-items: center; background: #bcbcbc; color: #fff; }

/* Explorer */
.explorer { left: 42px; top: 127px; bottom: 0; width: 800px; display: flex; flex-direction: column; padding: 0 8px 7px; }
.quick { display: flex; align-items: center; gap: 4px; height: 31px; }
.quick i { width: 1px; height: 12px; margin: 0 3px 0 2px; background: #999; }
.ribbon { display: flex; height: 24px; background: #fff; border-bottom: 1px solid #e4e4e4; }
.file { width: 56px; background: #1979ca; color: #fff; }
.ribtab { width: 62px; padding-left: 8px; }
.navrow { display: flex; align-items: center; gap: 9px; height: 36px; padding-left: 10px; background: #fff; }
.organize { height: 32px; background: #f5f5f5; border: 1px solid #ededed; }
.panes { flex: 1; min-height: 0; display: flex; padding-top: 8px; background: #fff; }
.tree { width: 161px; overflow: hidden; border-right: 1px solid #fafafa; }
.tree li, .files li { display: flex; align-items: center; gap: 5px; height: 21px; white-space: nowrap; }
.tree li { margin-right: 4px; padding-left: 30px; overflow: hidden; font-size: 12px; }
.tree .root { padding-left: 20px; }
.tree .sel { background: #f4f4f4; border: 1px solid #e0e0e0; padding-left: 29px; }
.files { padding: 128px 0 0 17px; }
.files li { gap: 4px; }
.count { display: flex; align-items: center; gap: 4px; height: 23px; padding: 0 2px 0 14px; background: #fff; color: #4d5a6b; }
.count span { flex: 1; }
.view { width: 22px; height: 22px; }
.view.on { background: #d6effa; border: 1px solid #69b6d6; }
.status { display: flex; align-items: center; height: 24px; padding: 0 2px; border-top: 1px solid #dcdcdc; background: #f0f0f0; }
.grow { flex: 1; }
.size { width: 88px; padding-left: 4px; border-left: 1px solid #d5d5d5; }
.zone { display: flex; gap: 4px; width: 140px; padding-left: 4px; border-left: 1px solid #d5d5d5; }
.status .s10 { align-self: end; margin-bottom: 2px; }

/* Task manager */
.taskmgr { left: 432px; top: 85px; bottom: 44px; width: 660px; display: flex; flex-direction: column; padding: 0 8px 7px; border: 1px solid #dedede; }
.tm-title { position: relative; height: 30px; display: flex; align-items: center; justify-content: center; border-bottom: 1px solid #dcdcdc; }
.tm-title h2, .dlg-title h2 { font-size: 14px; line-height: 30px; color: #333; }
.tm-title svg { position: absolute; right: 76px; top: 5px; }
.tm-title svg + svg { right: 46px; }
.tm-body { flex: 1; min-height: 0; display: flex; flex-direction: column; background: #fff; }
.menubar { height: 20px; background: #f6f6f6; }
.tabs { display: flex; align-items: end; height: 25px; padding-left: 145px; border-bottom: 1px solid #acacac; font-size: 12px; }
.tabs button { height: 20px; background: #efefef; border: 1px solid #acacac; border-left-width: 0; border-bottom: 0; }
.tabs .current { width: 50px; height: 23px; margin-bottom: -1px; background: #fff; }
.w-app { width: 73px; }
.w-start { width: 50px; }
.w-users { width: 39px; }
.w-serv { width: 50px; }
.grid { flex: 1; min-height: 0; margin-top: 12px; overflow: hidden; border-top: 1px solid #a0a0a0; border-bottom: 1px solid #a0a0a0; }
table { width: 100%; table-layout: fixed; border-collapse: collapse; font-size: 12px; }
.c1 { width: 146px; }
.c2 { width: 50px; }
.c3 { width: 100px; }
.c4 { width: 78px; }
.c5 { width: 41px; }
.c6 { width: 81px; }
th, td { height: 19px; padding: 0 0 0 5px; text-align: left; font-weight: 400; line-height: 19px; white-space: nowrap; overflow: hidden; border-right: 1px solid #f4f4f4; }
th { height: 24px; }
th:nth-child(5) { padding: 0 5px 0 0; text-align: right; }
td:nth-child(1), td:nth-child(2), td:nth-child(5), td:nth-child(6) { font-size: 11px; }
td:nth-child(5), td:nth-child(6) { padding: 0 9px 0 0; text-align: right; }
td:first-child { padding-left: 4px; }
.proc { display: flex; align-items: center; gap: 2px; height: 19px; }
.hot { background: #e5f3fb; outline: 1px solid #70c0e7; outline-offset: -1px; }
.n-icon, .php-icon { width: 16px; height: 16px; line-height: 16px; text-align: center; }
.n-icon { font-family: "Liberation Serif", serif; font-size: 17px; color: #802020; }
.php-icon { display: flex; justify-content: center; background: #8b91b8; font-size: 9px; line-height: 13px; color: #000; }
.tm-foot { height: 48px; display: flex; align-items: center; justify-content: space-between; padding: 0 6px; }
.fewer, .dlg-foot { display: flex; align-items: center; gap: 7px; }
.endtask { width: 85px; height: 22px; border: 1px solid #d0d0d0; background: #efefef; color: #858585; }

/* Dialog */
.dialog { left: 128px; top: 90px; width: 463px; padding: 0 6px 6px; background: #efc562; border: 1px solid #a58a50; }
.dlg-title { position: relative; display: flex; align-items: start; justify-content: end; height: 29px; }
.dlg-title > svg { margin: 5px auto 0 3px; }
.dlg-title h2 { position: absolute; inset: 0; text-align: center; color: #3f2c0a; }
.cap { position: relative; width: 27px; height: 20px; display: grid; place-items: center; }
.cap.red { width: 45px; background: #c9504e; color: #fff; }
.dlg-body { background: #fff; border: 1px solid #c9a75c; }
.dlg-main { display: flex; flex-direction: column; gap: 15px; padding: 12px 27px 16px 26px; border-bottom: 1px solid #dfdfdf; }
.item { display: flex; align-items: center; gap: 19px; height: 72px; margin-top: -14px; }
.big { width: 50px; height: 64px; }
.check { display: flex; align-items: center; gap: 5px; margin-top: 3px; }
.check input { appearance: none; width: 13px; height: 13px; margin: 0; border: 1px solid #707070; background: #fff; }
.actions { display: flex; justify-content: end; gap: 12px; margin-top: -6px; }
.actions button { width: 91px; height: 24px; border: 1px solid #acacac; background: linear-gradient(#f1f1f1, #e4e4e4); font-size: 12px; }
.actions .focus { border: 1px dotted #000; outline: 1px solid #888; outline-offset: -2px; }
.dlg-foot { height: 44px; padding: 0 25px; color: #6d6d6d; gap: 5px; }

.cursor { position: absolute; left: 689px; top: 576px; width: 13px; height: 20px; }

/* Taskbar */
.taskbar { display: flex; height: 40px; background: linear-gradient(86deg, #b6802c 0, #b27a2a 57%, #bda46c 57%, #c2a468 100%); }
.taskbar > button { width: 58px; margin-right: 4px; display: grid; place-items: center; }
.taskbar > button:first-child { width: 48px; }
.taskbar .open { border: 1px solid #e0c9a0; background: rgba(220, 190, 150, 0.35); }
.taskbar .lit { background: linear-gradient(100deg, #c66e5c 35%, #c5a384 36%); border-color: #fff; border-right-width: 4px; border-right-style: double; }
.taskbar .stacked { border-right-width: 5px; border-right-style: double; }
.tray { display: flex; align-items: center; gap: 7px; margin-left: auto; padding-right: 13px; color: #fff; }
.flag { margin-left: 6px; }
.tray time { width: 60px; margin-left: 6px; text-align: center; line-height: 17px; }
```
